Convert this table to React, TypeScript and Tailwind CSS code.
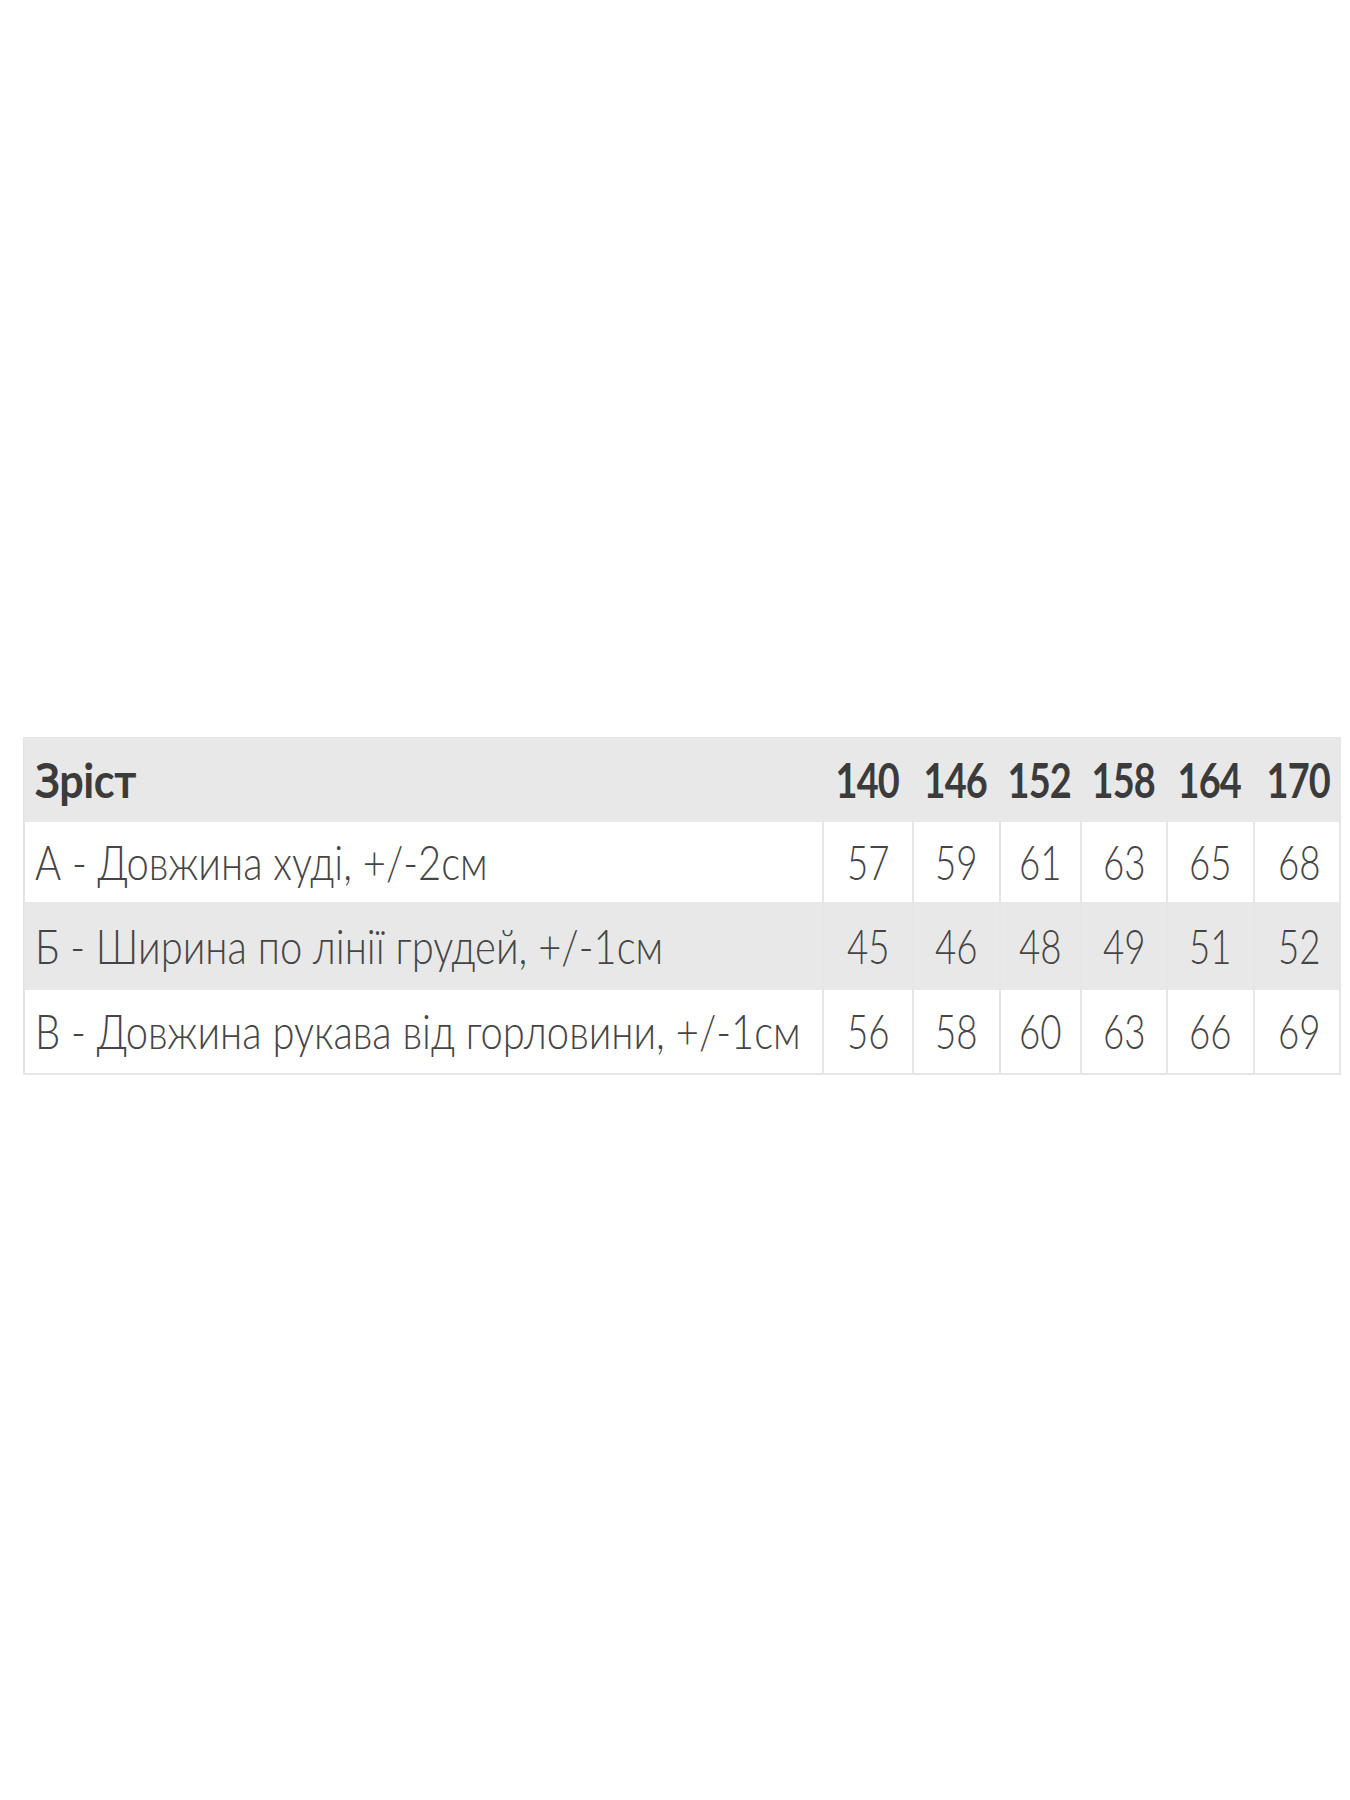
const sizes = ['140', '146', '152', '158', '164', '170']

const rows = [
  { label: 'А - Довжина худі, +/-2см', values: ['57', '59', '61', '63', '65', '68'], shaded: false, h: 'h-[80px]' },
  { label: 'Б - Ширина по лінії грудей, +/-1см', values: ['45', '46', '48', '49', '51', '52'], shaded: true, h: 'h-[88px]' },
  { label: 'В - Довжина рукава від горловини, +/-1см', values: ['56', '58', '60', '63', '66', '69'], shaded: false, h: 'h-[83px]' },
]

const cols = 'grid grid-cols-[797px_90px_87px_81px_86px_87px_90px]'

export default function App() {
  return (
    <div className="min-h-[1800px] bg-white pt-[737px] pl-[23px] font-['Lato',sans-serif]">
      <div className="w-[1318px] border-2 border-t-0 border-[#e6e6e6]">
        <div className={`${cols} h-[85px] bg-[#e8e8e8] text-[#3b3b3b] font-bold`}>
          <div className="flex items-center pl-[10px] text-[48px]">
            <span className="inline-block origin-left scale-x-[0.9] tracking-[-0.5px]">Зріст</span>
          </div>
          {sizes.map((s) => (
            <div key={s} className="flex items-center justify-center text-[48px]">
              <span className="inline-block scale-x-[0.79] tracking-[-1px]">{s}</span>
            </div>
          ))}
        </div>
        {rows.map((r) => (
          <div
            key={r.label}
            className={`${cols} ${r.h} ${r.shaded ? 'bg-[#e8e8e8]' : 'bg-white'} text-[#454545] font-light`}
          >
            <div className="flex items-center pl-[10px] text-[47px] whitespace-nowrap">
              <span className="inline-block origin-left scale-x-[0.85]">{r.label}</span>
            </div>
            {r.values.map((v, i) => (
              <div
                key={i}
                className="flex items-center justify-center text-[47px] border-l-2 border-[#e6e6e6]"
              >
                <span className="inline-block scale-x-[0.78]">{v}</span>
              </div>
            ))}
          </div>
        ))}
      </div>
    </div>
  )
}
